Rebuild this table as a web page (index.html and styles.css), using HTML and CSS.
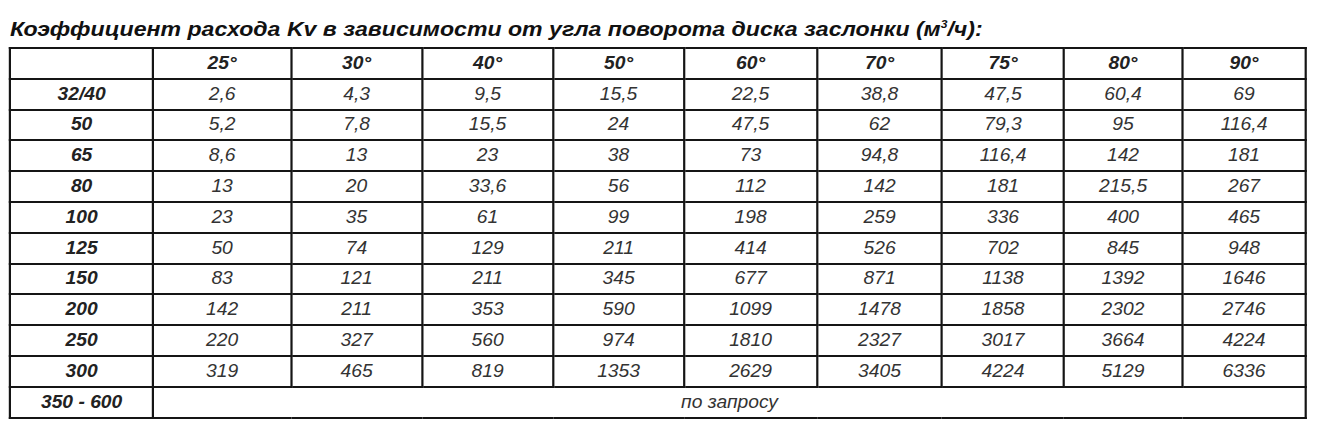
FILE: index.html
```html
<!DOCTYPE html>
<html lang="ru">
<head>
<meta charset="utf-8">
<title>Kv</title>
<link rel="stylesheet" href="styles.css">
</head>
<body>
<div class="page">
  <h1 class="title">Коэффициент расхода Kv в зависимости от угла поворота диска заслонки (м<sup>3</sup>/ч):</h1>
  <table class="kv">
    <colgroup>
      <col class="c0"><col class="c1"><col class="c2"><col class="c3"><col class="c4"><col class="c5"><col class="c6"><col class="c7"><col class="c8"><col class="c9">
    </colgroup>
    <tr class="head"><td></td><td>25°</td><td>30°</td><td>40°</td><td>50°</td><td>60°</td><td>70°</td><td>75°</td><td>80°</td><td>90°</td></tr>
    <tr><th>32/40</th><td>2,6</td><td>4,3</td><td>9,5</td><td>15,5</td><td>22,5</td><td>38,8</td><td>47,5</td><td>60,4</td><td>69</td></tr>
    <tr><th>50</th><td>5,2</td><td>7,8</td><td>15,5</td><td>24</td><td>47,5</td><td>62</td><td>79,3</td><td>95</td><td>116,4</td></tr>
    <tr><th>65</th><td>8,6</td><td>13</td><td>23</td><td>38</td><td>73</td><td>94,8</td><td>116,4</td><td>142</td><td>181</td></tr>
    <tr><th>80</th><td>13</td><td>20</td><td>33,6</td><td>56</td><td>112</td><td>142</td><td>181</td><td>215,5</td><td>267</td></tr>
    <tr><th>100</th><td>23</td><td>35</td><td>61</td><td>99</td><td>198</td><td>259</td><td>336</td><td>400</td><td>465</td></tr>
    <tr><th>125</th><td>50</td><td>74</td><td>129</td><td>211</td><td>414</td><td>526</td><td>702</td><td>845</td><td>948</td></tr>
    <tr><th>150</th><td>83</td><td>121</td><td>211</td><td>345</td><td>677</td><td>871</td><td>1138</td><td>1392</td><td>1646</td></tr>
    <tr><th>200</th><td>142</td><td>211</td><td>353</td><td>590</td><td>1099</td><td>1478</td><td>1858</td><td>2302</td><td>2746</td></tr>
    <tr><th>250</th><td>220</td><td>327</td><td>560</td><td>974</td><td>1810</td><td>2327</td><td>3017</td><td>3664</td><td>4224</td></tr>
    <tr><th>300</th><td>319</td><td>465</td><td>819</td><td>1353</td><td>2629</td><td>3405</td><td>4224</td><td>5129</td><td>6336</td></tr>
    <tr><th>350 - 600</th><td colspan="9">по запросу</td></tr>
  </table>
</div>
</body>
</html>
```

FILE: styles.css
```css
html, body {
  margin: 0;
  padding: 0;
  background: #ffffff;
  overflow: hidden;
}

/* the source picture is slightly stretched horizontally */
.page {
  box-sizing: border-box;
  width: 1190px;
  padding: 17px 0 0 8.2px;
  font-family: "Liberation Sans", Arial, sans-serif;
  color: #222222;
  transform: scaleX(1.1);
  transform-origin: 0 0;
}

.title {
  margin: 0 0 6px 1px;
  font-size: 21px;
  line-height: 24px;
  font-weight: bold;
  font-style: italic;
  color: #111111;
  white-space: nowrap;
}

.title sup {
  font-size: 11px;
  line-height: 0;
  vertical-align: 8px;
}

.kv {
  border-collapse: collapse;
  table-layout: fixed;
  width: 1178.2px;
}

.c0 { width: 130px; }
.c1 { width: 125.45px; }
.c2 { width: 119.09px; }
.c3 { width: 119.09px; }
.c4 { width: 119.09px; }
.c5 { width: 120.91px; }
.c6 { width: 113.64px; }
.c7 { width: 110.91px; }
.c8 { width: 107.27px; }
.c9 { width: 112.73px; }

.kv tr {
  height: 30.8px;
}

.kv td, .kv th {
  border: 2px solid #151515;
  padding: 0;
  text-align: center;
  vertical-align: middle;
  font-size: 17.5px;
  font-style: italic;
  font-weight: normal;
  color: #333333;
}

.kv th {
  font-weight: bold;
  color: #222222;
}

.kv .head td {
  font-weight: bold;
  color: #222222;
}
```
